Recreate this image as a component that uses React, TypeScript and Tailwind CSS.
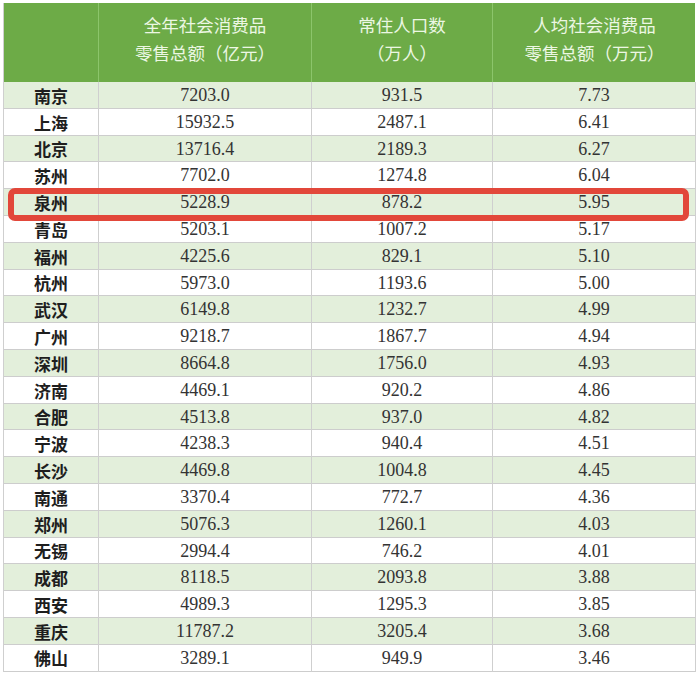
import React from "react";

const rows: [string, string, string, string][] = [
  ["南京", "7203.0", "931.5", "7.73"],
  ["上海", "15932.5", "2487.1", "6.41"],
  ["北京", "13716.4", "2189.3", "6.27"],
  ["苏州", "7702.0", "1274.8", "6.04"],
  ["泉州", "5228.9", "878.2", "5.95"],
  ["青岛", "5203.1", "1007.2", "5.17"],
  ["福州", "4225.6", "829.1", "5.10"],
  ["杭州", "5973.0", "1193.6", "5.00"],
  ["武汉", "6149.8", "1232.7", "4.99"],
  ["广州", "9218.7", "1867.7", "4.94"],
  ["深圳", "8664.8", "1756.0", "4.93"],
  ["济南", "4469.1", "920.2", "4.86"],
  ["合肥", "4513.8", "937.0", "4.82"],
  ["宁波", "4238.3", "940.4", "4.51"],
  ["长沙", "4469.8", "1004.8", "4.45"],
  ["南通", "3370.4", "772.7", "4.36"],
  ["郑州", "5076.3", "1260.1", "4.03"],
  ["无锡", "2994.4", "746.2", "4.01"],
  ["成都", "8118.5", "2093.8", "3.88"],
  ["西安", "4989.3", "1295.3", "3.85"],
  ["重庆", "11787.2", "3205.4", "3.68"],
  ["佛山", "3289.1", "949.9", "3.46"],
];

const cjk = { fontFamily: '"Noto Sans CJK SC", "Noto Sans", sans-serif' };
const num = { fontFamily: '"Liberation Serif", "Noto Sans CJK SC", serif' };

export default function App() {
  return (
    <div className="relative w-[700px] h-[678px] bg-white overflow-hidden pt-[3px] pl-[3px]">
      <div className="w-[692px] border-l border-[#cfcfcf]">
        {/* Header */}
        <div
          className="grid grid-cols-[95px_213px_181px_203px] h-[79px] bg-[#6dab47] text-[#ecf7e3] text-[17.5px] leading-[28px]"
          style={cjk}
        >
          <div className="border-r border-[#8cc56b]" />
          <div className="flex flex-col items-center justify-center pb-[8px] border-r border-[#8cc56b]">
            <span>全年社会消费品</span>
            <span>零售总额（亿元）</span>
          </div>
          <div className="flex flex-col items-center justify-center pb-[8px] border-r border-[#8cc56b]">
            <span>常住人口数</span>
            <span>（万人）</span>
          </div>
          <div className="flex flex-col items-center justify-center pb-[8px]">
            <span>人均社会消费品</span>
            <span>零售总额（万元）</span>
          </div>
        </div>

        {/* Body */}
        {rows.map((r, i) => (
          <div
            key={r[0]}
            className={`grid grid-cols-[95px_213px_181px_203px] h-[26.8px] border-b border-[#cdcdcd] ${
              i % 2 === 0 ? "bg-[#e3efdb]" : "bg-white"
            }`}
          >
            <div
              className="flex items-center justify-center border-r border-[#cfcfcf] text-[17px] font-bold text-[#1e1e1e]"
              style={cjk}
            >
              {r[0]}
            </div>
            <div
              className="flex items-center justify-center border-r border-[#cfcfcf] text-[18px] text-[#333]"
              style={num}
            >
              {r[1]}
            </div>
            <div
              className="flex items-center justify-center border-r border-[#cfcfcf] text-[18px] text-[#333]"
              style={num}
            >
              {r[2]}
            </div>
            <div
              className="flex items-center justify-center border-r border-[#cfcfcf] text-[18px] text-[#333]"
              style={num}
            >
              {r[3]}
            </div>
          </div>
        ))}
      </div>

      {/* highlight box around 泉州 */}
      <div className="absolute left-[8px] top-[188px] w-[681px] h-[33px] border-[6px] border-[#e2473a] rounded-[7px]" />
    </div>
  );
}
